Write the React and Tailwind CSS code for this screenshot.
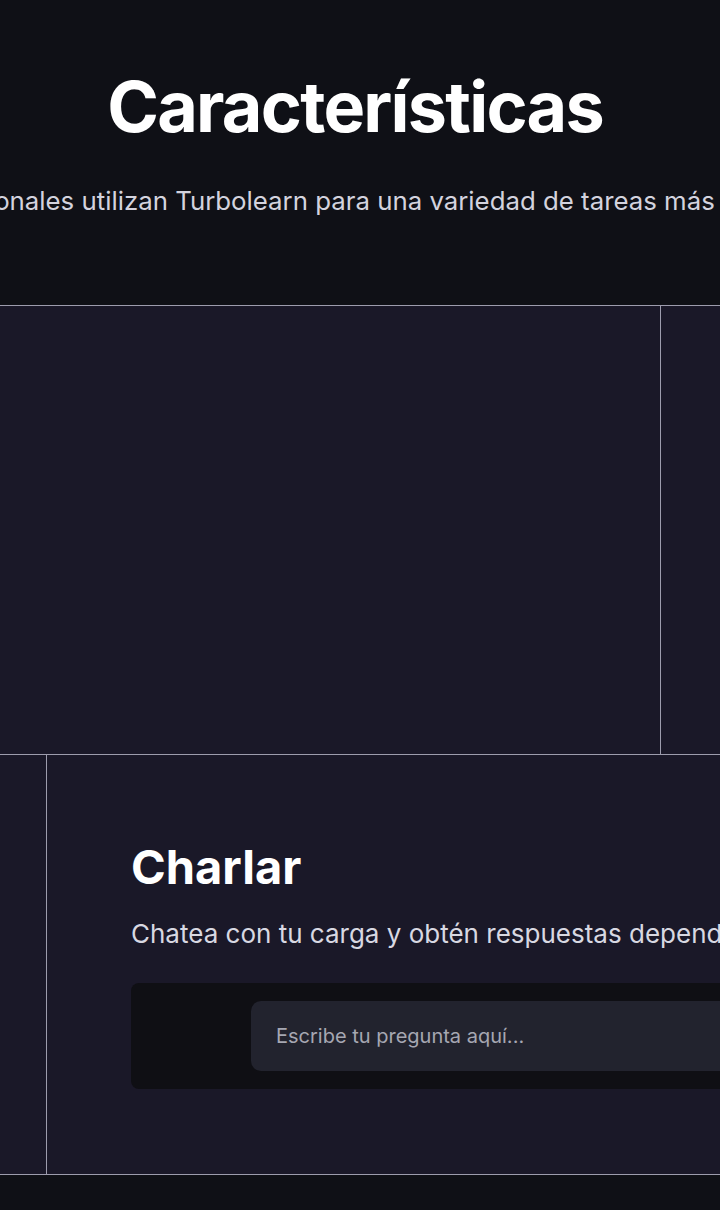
export default function App() {
  return (
    <div
      className="w-[720px] min-h-[1210px] overflow-hidden bg-[#0f1016] text-white"
      style={{ fontFamily: "Inter, 'Noto Sans', sans-serif" }}
    >
      <header className="h-[305px] flex flex-col items-center pt-[72px] pr-[10px]">
        <h1 className="text-[70px] leading-none font-bold tracking-[-0.025em] whitespace-nowrap">
          Características
        </h1>
        <p className="mt-[46px] text-[25.8px] leading-none text-[#d3d3de] whitespace-nowrap">
          Estudiantes y profesionales utilizan Turbolearn para una variedad de tareas más allá de tomar apunte
        </p>
      </header>

      <section className="border-t border-[#9d9cad] bg-[#1a1828]">
        <div className="flex h-[448px]">
          <div className="w-[661px] shrink-0 border-r border-[#9d9cad]" />
          <div className="flex-1" />
        </div>
        <div className="flex h-[421px] border-y border-[#9d9cad]">
          <div className="w-[47px] shrink-0 border-r border-[#9d9cad]" />
          <div className="flex-1 min-w-0 pl-[84px] pt-[88px]">
            <h2 className="text-[47px] leading-none font-bold whitespace-nowrap">
              Charlar
            </h2>
            <p className="mt-[31px] text-[26px] leading-none text-[#d8d8e2] whitespace-nowrap">
              Chatea con tu carga y obtén respuestas dependientes del contexto
            </p>
            <div className="mt-[36px] w-[800px] rounded-lg bg-[#0f0f14] pl-[120px] py-[18px]">
              <div className="h-[70px] rounded-[10px] bg-[#22232e] flex items-center pl-[25px]">
                <span className="text-[20px] text-[#a6a7b2] whitespace-nowrap">
                  Escribe tu pregunta aquí...
                </span>
              </div>
            </div>
          </div>
        </div>
      </section>
    </div>
  );
}
